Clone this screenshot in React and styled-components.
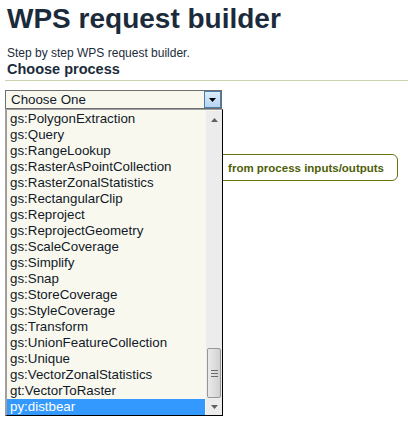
import React from 'react';
import styled, { createGlobalStyle } from 'styled-components';

const Global = createGlobalStyle`
  html, body { margin: 0; padding: 0; background: #fff; }
  body { font-family: "Liberation Sans", Arial, sans-serif; }
`;

const Page = styled.div`
  width: 408px;
  height: 424px;
  overflow: hidden;
  box-sizing: border-box;
  padding: 3px 0 0 5px;
`;

const Title = styled.h1`
  margin: 0;
  padding-left: 2px;
  font-size: 28px;
  line-height: 32px;
  font-weight: bold;
  color: #1b2b3b;
`;

const Intro = styled.p`
  margin: 11px 0 0;
  padding-left: 2px;
  font-size: 12px;
  line-height: 14px;
  color: #1b2b3b;
`;

const Heading = styled.h2`
  margin: 1px 0 0;
  padding-left: 2px;
  font-size: 14.5px;
  line-height: 16px;
  font-weight: bold;
  color: #1b2b3b;
`;

const Rule = styled.div`
  margin-top: 3px;
  height: 1px;
  background: #c9d5ad;
`;

const SelectWrap = styled.div`
  position: relative;
  margin-top: 9px;
  width: 217px;
`;

const SelectBox = styled.div`
  box-sizing: border-box;
  height: 19px;
  border: 1px solid #6e6e6e;
  background: #f9f8ef;
  display: flex;
  align-items: center;
  justify-content: space-between;
  padding-left: 5px;
  font-size: 13.33px;
  color: #111a28;
`;

const ArrowButton = styled.div`
  box-sizing: border-box;
  width: 17px;
  height: 17px;
  border: 1px solid #4a7fad;
  background: linear-gradient(#dcecfb, #b7d5f3);
  display: flex;
  align-items: center;
  justify-content: center;
`;

const ListPanel = styled.div`
  position: absolute;
  top: 19px;
  left: 0;
  width: 218px;
  box-sizing: border-box;
  border-left: 2px solid #a0a0a0;
  border-top: 1px solid #a0a0a0;
  border-right: 1px solid #000;
  border-bottom: 1px solid #000;
  padding-top: 1px;
  display: flex;
  background: #f9f8ef;
  z-index: 2;
`;

const Rows = styled.div`
  flex: 1;
  display: flex;
  flex-direction: column;
`;

const Row = styled.div`
  height: 16px;
  line-height: 16px;
  padding-left: 3px;
  font-size: 13.33px;
  white-space: nowrap;
  overflow: hidden;
  color: ${p => (p.$selected ? '#fff' : '#111a28')};
  background: ${p => (p.$selected ? '#3399ff' : 'transparent')};
`;

const Scrollbar = styled.div`
  width: 17px;
  display: flex;
  flex-direction: column;
  background: #ececec;
  border-left: 1px solid #f6f6f6;
  box-sizing: border-box;
`;

const ScrollBtn = styled.div`
  height: 17px;
  display: flex;
  align-items: center;
  justify-content: center;
`;

const Track = styled.div`
  flex: 1;
  display: flex;
  flex-direction: column;
  justify-content: flex-end;
  padding: 0 1px;
`;

const Thumb = styled.div`
  height: 50px;
  box-sizing: border-box;
  border: 1px solid #979797;
  border-radius: 2px;
  background: linear-gradient(90deg, #e9e9e9, #dcdcdc 60%, #d0d0d0);
  display: flex;
  flex-direction: column;
  align-items: center;
  justify-content: center;
  gap: 2px;
`;

const Grip = styled.div`
  width: 7px;
  height: 1px;
  background: #6a6a6a;
`;

const InfoBox = styled.div`
  margin-top: 45px;
  width: 393px;
  height: 27px;
  box-sizing: border-box;
  border: 1px solid #66760f;
  border-radius: 6px;
  display: flex;
  align-items: center;
  justify-content: flex-end;
  padding-right: 13px;
  font-size: 11.5px;
  font-weight: bold;
  color: #4e5e08;
`;

const items = [
  'gs:PolygonExtraction',
  'gs:Query',
  'gs:RangeLookup',
  'gs:RasterAsPointCollection',
  'gs:RasterZonalStatistics',
  'gs:RectangularClip',
  'gs:Reproject',
  'gs:ReprojectGeometry',
  'gs:ScaleCoverage',
  'gs:Simplify',
  'gs:Snap',
  'gs:StoreCoverage',
  'gs:StyleCoverage',
  'gs:Transform',
  'gs:UnionFeatureCollection',
  'gs:Unique',
  'gs:VectorZonalStatistics',
  'gt:VectorToRaster',
  'py:distbear',
];

const Tri = ({ up, color, w = 7 }) => (
  <svg width={w} height={4} viewBox="0 0 7 4">
    {up ? <polygon points="0,4 7,4 3.5,0" fill={color} /> : <polygon points="0,0 7,0 3.5,4" fill={color} />}
  </svg>
);

export default function App() {
  return (
    <Page>
      <Global />
      <Title>WPS request builder</Title>
      <Intro>Step by step WPS request builder.</Intro>
      <Heading>Choose process</Heading>
      <Rule />
      <SelectWrap>
        <SelectBox>
          <span>Choose One</span>
          <ArrowButton>
            <Tri color="#000" />
          </ArrowButton>
        </SelectBox>
        <ListPanel>
          <Rows>
            {items.map(it => (
              <Row key={it} $selected={it === 'py:distbear'}>{it}</Row>
            ))}
          </Rows>
          <Scrollbar>
            <ScrollBtn><Tri up color="#606060" /></ScrollBtn>
            <Track>
              <Thumb>
                <Grip /><Grip /><Grip />
              </Thumb>
            </Track>
            <ScrollBtn><Tri color="#606060" /></ScrollBtn>
          </Scrollbar>
        </ListPanel>
      </SelectWrap>
      <InfoBox>from process inputs/outputs</InfoBox>
    </Page>
  );
}
